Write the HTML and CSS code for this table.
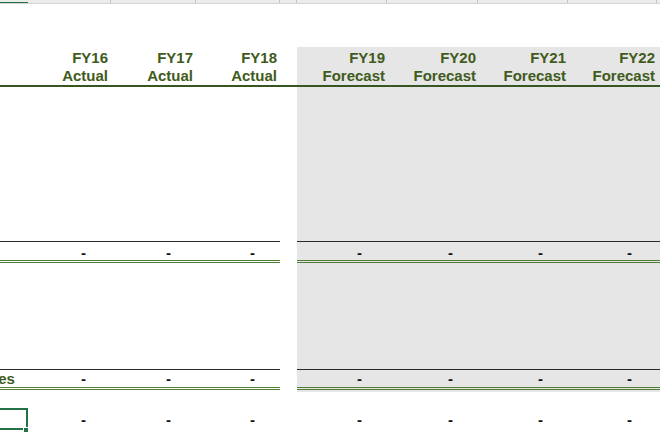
FILE: index.html
```html
<!DOCTYPE html>
<html>
<head>
<meta charset="utf-8">
<link rel="stylesheet" href="styles.css">
</head>
<body>
<div class="sheet">
  <div class="row strip">
    <div class="sc sel"></div><div class="sc sep"></div><div class="sc sep"></div><div class="sc sep"></div><div class="sc sep"></div><div class="sc sep"></div><div class="sc sep"></div><div class="sc sep"></div><div class="sc sep"></div><div class="sc"></div>
  </div>

  <div class="row band top-gap"></div>

  <div class="row head">
    <div class="c"></div>
    <div class="c">FY16<br>Actual</div>
    <div class="c">FY17<br>Actual</div>
    <div class="c">FY18<br>Actual</div>
    <div class="c sp"></div>
    <div class="c fc">FY19<br>Forecast</div>
    <div class="c fc">FY20<br>Forecast</div>
    <div class="c fc">FY21<br>Forecast</div>
    <div class="c fc">FY22<br>Forecast</div>
    <div class="c fc"></div>
  </div>

  <div class="row band gap1">
    <div></div><div></div><div></div><div></div><div></div><div class="fc"></div><div class="fc"></div><div class="fc"></div><div class="fc"></div><div class="fc"></div>
  </div>

  <div class="row total">
    <div class="t"></div>
    <div class="t num">-</div><div class="t num">-</div><div class="t num">-</div>
    <div class="sp"></div>
    <div class="t num fc">-</div><div class="t num fc">-</div><div class="t num fc">-</div><div class="t num fc">-</div><div class="t fc"></div>
  </div>

  <div class="row band gap2">
    <div></div><div></div><div></div><div></div><div></div><div class="fc"></div><div class="fc"></div><div class="fc"></div><div class="fc"></div><div class="fc"></div>
  </div>

  <div class="row total total-b">
    <div class="t label">Total Expenses</div>
    <div class="t num">-</div><div class="t num">-</div><div class="t num">-</div>
    <div class="sp"></div>
    <div class="t num fc">-</div><div class="t num fc">-</div><div class="t num fc">-</div><div class="t num fc">-</div><div class="t fc"></div>
  </div>

  <div class="row band gap3">
    <div></div><div></div><div></div><div></div><div></div><div class="fc"></div><div class="fc"></div><div class="fc"></div><div class="fc"></div><div class="fc"></div>
  </div>

  <div class="row band gap4"></div>

  <div class="row plain">
    <div class="selected"><span class="handle"></span></div>
    <div class="num">-</div><div class="num">-</div><div class="num">-</div>
    <div></div>
    <div class="num">-</div><div class="num">-</div><div class="num">-</div><div class="num">-</div><div></div>
  </div>
</div>
</body>
</html>
```

FILE: styles.css
```css
* { box-sizing: border-box; }

html, body {
  margin: 0;
  padding: 0;
  background: #ffffff;
}

body {
  width: 660px;
  height: 440px;
  overflow: hidden;
  font-family: "Liberation Sans", Arial, sans-serif;
  font-size: 15px;
}

.sheet {
  display: flex;
  flex-direction: column;
}

.row {
  display: grid;
  grid-template-columns: 28px 83px 85px 84px 17px 90px 91px 90px 89px 1fr;
}

/* column header strip */
.strip {
  height: 4px;
  background: #ececec;
  border-bottom: 1px solid #d4d4d4;
}
.sc { height: 3px; }
.sc.sep { border-right: 1px solid #c4c4c4; }
.sc.sel { border-bottom: 1px solid #217346; }

.fc { background: #e6e6e6; }

.top-gap { height: 43px; }
.gap1 { height: 154px; }
.gap2 { height: 106px; }
.gap3 { height: 2px; }
.gap4 { height: 16px; }

/* header row */
.head .c {
  height: 40px;
  padding: 2px 3px 0 0;
  line-height: 18px;
  text-align: right;
  font-weight: bold;
  color: #3f5b20;
  border-bottom: 2px solid #375623;
  white-space: nowrap;
}
.head .c.fc { padding-right: 2px; }

/* total rows */
.total .t {
  height: 22px;
  padding-top: 2px;
  line-height: 17px;
  border-top: 1px solid #2a2a2a;
  border-bottom: 3px double #4f7c34;
}
.total-b .t {
  height: 21px;
  padding-top: 1px;
  line-height: 16px;
}

.num {
  text-align: right;
  padding-right: 25px;
  font-weight: bold;
  color: #111111;
}

.label {
  overflow: hidden;
  white-space: nowrap;
  text-indent: -94px;
  font-weight: bold;
  color: #3f5b20;
}

/* selected cell row */
.plain > div {
  height: 22px;
  padding-top: 1px;
  line-height: 21px;
}
.selected {
  position: relative;
  border: 2px solid #217346;
  border-left: none;
}
.handle {
  position: absolute;
  right: -3px;
  bottom: -5px;
  width: 6px;
  height: 6px;
  background: #217346;
  border: 1px solid #ffffff;
}
```
